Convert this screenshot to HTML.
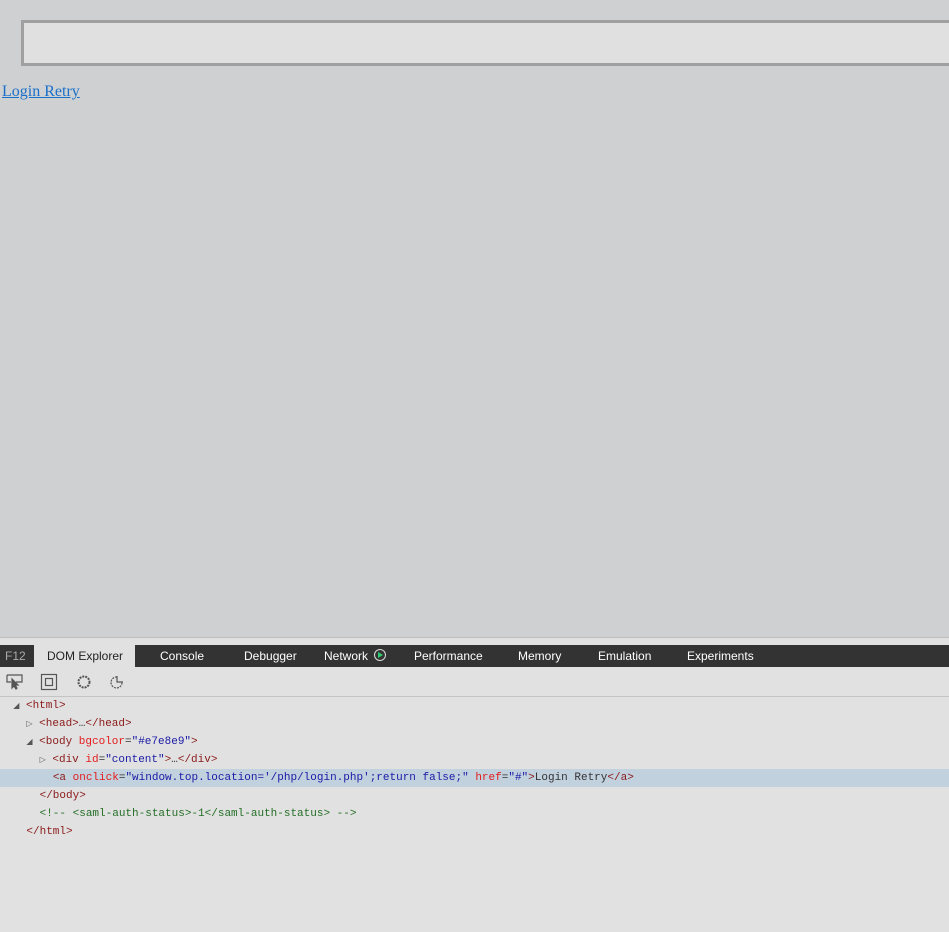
<!DOCTYPE html>
<html><head><style>
body{margin:0;width:949px;height:931px;background:#cfd0d2;position:relative;overflow:hidden;font-family:"Liberation Sans",sans-serif}
.box{position:absolute;left:21px;top:20px;width:940px;height:40px;border:3px solid #a0a0a0;background:#e0e0e0}
.link{position:absolute;left:2px;top:83px;font-family:"Liberation Serif",serif;font-size:16px;color:#1a6fc9;text-decoration:underline}
.dev{position:absolute;left:0;top:637px;width:949px;height:294px;background:#e1e1e1;border-top:1px solid #bdbdbd}
.tabs{position:absolute;left:0;top:7px;width:949px;height:22px;background:#333;font-size:12px;color:#fff}
.tabs span{position:absolute;top:4px}
.sel{position:absolute;left:34px;top:0;width:101px;height:22px;background:#e1e1e1}
.tool{position:absolute;left:0;top:29px;width:949px;height:29px;border-bottom:1px solid #c4c4c4}
.tree{position:absolute;left:0;top:59px;width:949px;font-family:"Liberation Mono",monospace;font-size:11px}
.ln{height:18px;line-height:18px;white-space:pre;color:#333}
.t{color:#881280}.tg{color:#8b1a1a}.a{color:#e31c1c}.v{color:#1a1aa6}.c{color:#236e25}
.hl{background:#c2d1de}
</style></head><body>
<div class="box"></div>
<a class="link">Login Retry</a>
<div class="dev">
<div class="tabs"><div class="sel"></div>
<span style="left:5px;color:#aaa">F12</span>
<span style="left:47px;color:#222">DOM Explorer</span>
<span style="left:160px">Console</span>
<span style="left:244px">Debugger</span>
<span style="left:324px">Network</span>
<span style="left:374px;top:4px;width:12px;height:12px;border:1px solid #ddd;border-radius:50%;box-sizing:border-box"><span style="position:absolute;left:3px;top:2px;width:0;height:0;border-left:5px solid #2ecc71;border-top:3px solid transparent;border-bottom:3px solid transparent"></span></span>
<span style="left:414px">Performance</span>
<span style="left:518px">Memory</span>
<span style="left:598px">Emulation</span>
<span style="left:687px">Experiments</span>
</div>
<div class="tool">
<svg width="140" height="28" style="position:absolute;left:0;top:0" fill="none" stroke="#555" stroke-width="1.2">
<path d="M7 8h15v7h-6M7 8v7h4"/><path d="M12 12l0 9 2-2 2 3 1-1-2-3h3z" fill="#555"/>
<rect x="41.5" y="7.5" width="15" height="15"/><rect x="45.5" y="11.5" width="7" height="7"/>
<circle cx="84" cy="15" r="5.5" stroke-width="2" stroke-dasharray="2 1"/>
<path d="M117 10a5.5 5.5 0 1 0 5 5" stroke-dasharray="2 1"/><path d="M117 9v6h6"/>
</svg>
</div>
<div class="tree">
<div class="ln">  <span style="color:#555;font-size:8px">◢</span> <span class="tg">&lt;html&gt;</span></div>
<div class="ln">    <span style="color:#555;font-size:8px">▷</span> <span class="tg">&lt;head&gt;</span>…<span class="tg">&lt;/head&gt;</span></div>
<div class="ln">    <span style="color:#555;font-size:8px">◢</span> <span class="tg">&lt;body </span><span class="a">bgcolor</span>=<span class="v">"#e7e8e9"</span><span class="tg">&gt;</span></div>
<div class="ln">      <span style="color:#555;font-size:8px">▷</span> <span class="tg">&lt;div </span><span class="a">id</span>=<span class="v">"content"</span><span class="tg">&gt;</span>…<span class="tg">&lt;/div&gt;</span></div>
<div class="ln hl">        <span class="tg">&lt;a </span><span class="a">onclick</span>=<span class="v">"window.top.location='/php/login.php';return false;"</span> <span class="a">href</span>=<span class="v">"#"</span><span class="tg">&gt;</span>Login Retry<span class="tg">&lt;/a&gt;</span></div>
<div class="ln">      <span class="tg">&lt;/body&gt;</span></div>
<div class="ln">      <span class="c">&lt;!-- &lt;saml-auth-status&gt;-1&lt;/saml-auth-status&gt; --&gt;</span></div>
<div class="ln">    <span class="tg">&lt;/html&gt;</span></div>
</div>
</div>
</body></html>
